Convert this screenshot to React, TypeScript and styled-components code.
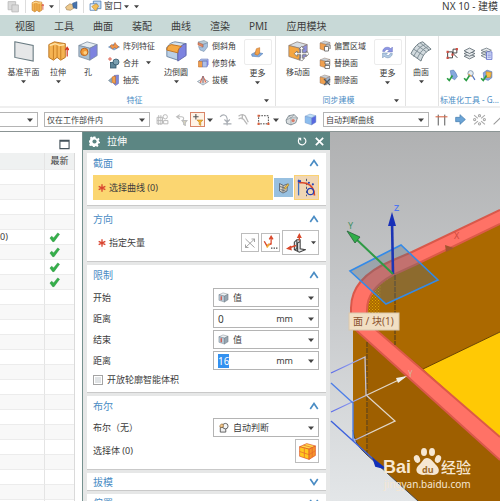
import React, { useEffect, useRef } from "react";
import styled, { createGlobalStyle } from "styled-components";

const GlobalStyle = createGlobalStyle`
  * { box-sizing: border-box; }
  html, body, #root { height: 100%; margin: 0; }
  body {
    overflow: hidden;
    background: #fff;
    color: #3c3c3c;
    font-family: "Noto Sans", "Noto Sans CJK SC", sans-serif;
    font-size: 9px;
  }
  button, input, select { font: inherit; color: inherit; }
  button { background: none; border: 0; padding: 0; margin: 0; }
  svg { display: block; flex: none; }
`;

const Window = styled.div`
  height: 100vh;
  display: flex;
  flex-direction: column;
  overflow: hidden;
`;

/* ---------- title bar and tabs ---------- */

const TitleBar = styled.header`
  flex: none;
  height: 15px;
  padding: 0 2px 3px 7px;
  display: flex;
  align-items: center;
  justify-content: space-between;
`;
const QuickTools = styled.div`
  display: flex;
  align-items: center;
  gap: 5px;
`;
const Split = styled.span`
  width: 1px;
  height: 13px;
  background: #ddd;
`;
const WindowMenu = styled.button`
  display: flex;
  align-items: center;
  gap: 2px;
  line-height: 10px;
`;
const Title = styled.h1`
  margin: 0;
  font-size: 10px;
  line-height: 11px;
  font-weight: 400;
  white-space: nowrap;
`;
const Tabs = styled.nav`
  flex: none;
  height: 21px;
  padding-left: 15px;
  display: flex;
  align-items: center;
  gap: 19px;
  background: #c8d9d7;
`;
const Tab = styled.button`
  font-size: 10px;
  line-height: 20px;
  white-space: nowrap;
`;

/* ---------- ribbon ---------- */

const Ribbon = styled.div`
  flex: none;
  height: 70px;
  display: flex;
  overflow: hidden;
`;
const Group = styled.section<{ $pad?: number; $grow?: boolean }>`
  flex: ${(p) => (p.$grow ? "1 0 62px" : "none")};
  display: flex;
  flex-direction: column;
  justify-content: space-between;
  padding-left: ${(p) => p.$pad ?? 0}px;
  padding-right: 2px;
  border-right: 1px solid #e2e2e2;
`;
const GroupTools = styled.div`
  display: flex;
`;
const GroupFoot = styled.div`
  display: flex;
  align-items: center;
  height: 12px;
  color: #4a8cc4;
  font-size: 8px;
  line-height: 12px;
  white-space: nowrap;
  & > span { flex: 1; text-align: center; }
  & > svg { margin-right: 4px; }
`;
const BigButton = styled.button<{ $w: number }>`
  width: ${(p) => p.$w}px;
  padding-top: 4px;
  display: flex;
  flex-direction: column;
  align-items: center;
  font-size: 8px;
  line-height: 14px;
  white-space: nowrap;
  & > span { margin-top: 3px; }
`;
const MoreButton = styled(BigButton)`
  padding-top: 3px;
  & > span { margin-top: 1px; }
`;
const MoreFrame = styled.i`
  width: 28px;
  height: 26px;
  border: 1px solid #ececec;
  border-radius: 2px;
  display: flex;
  align-items: center;
  justify-content: center;
`;
const SmallColumn = styled.div<{ $w?: number }>`
  width: ${(p) => (p.$w ? p.$w + "px" : "auto")};
  padding: 1px 6px 0;
  display: flex;
  flex-direction: column;
`;
const SmallButton = styled.button`
  display: flex;
  align-items: center;
  gap: 3px;
  height: 17px;
  font-size: 8px;
  line-height: 14px;
  white-space: nowrap;
  & > svg:last-child { margin-left: 4px; }
`;
const IconGrid = styled.div`
  display: grid;
  grid-template-columns: repeat(3, 13px);
  grid-auto-rows: 22px;
  column-gap: 4px;
  padding-top: 5px;
  align-items: center;
`;

/* ---------- selection bar ---------- */

const SelectionBar = styled.div`
  flex: none;
  height: 26px;
  display: flex;
  align-items: center;
  gap: 6px;
  border-top: 2px solid #efefef;
  border-bottom: 1px solid #8b9494;
  overflow: hidden;
`;
const Cluster = styled.div`
  display: flex;
  align-items: center;
  gap: 3px;
`;
const IconButton = styled.button<{ $active?: boolean }>`
  flex: none;
  width: 13px;
  height: 13px;
  display: flex;
  align-items: center;
  justify-content: center;
  ${(p) => p.$active && "outline: 1px solid #d98568; background: #fff3e6;"}
`;
const Combo = styled.span<{ $w?: number; $h: number; $cut?: boolean }>`
  flex: none;
  width: ${(p) => (p.$w ? p.$w + "px" : "100%")};
  height: ${(p) => p.$h}px;
  padding: 0 4px 0 ${(p) => (p.$h > 16 ? 4 : 2)}px;
  display: flex;
  align-items: center;
  gap: 4px;
  background: #fff;
  border: 1px solid #b4b4b4;
  ${(p) => p.$cut && "border-left: 0;"}
`;
const Select = styled.select<{ $small?: boolean }>`
  appearance: none;
  flex: 1;
  min-width: 0;
  border: 0;
  padding: 0;
  background: transparent;
  font-size: ${(p) => (p.$small ? 8 : 9)}px;
  line-height: 12px;
  outline: 0;
`;

/* ---------- lower area ---------- */

const Body = styled.main`
  flex: 1;
  min-height: 0;
  display: flex;
`;
const Navigator = styled.aside`
  flex: none;
  width: 82px;
  overflow: hidden;
  background: #fff;
`;
const NavHead = styled.div`
  height: 21px;
  padding: 3px 12px 0 0;
  display: flex;
  align-items: center;
  justify-content: flex-end;
`;
const NavTable = styled.table`
  width: 75px;
  border-collapse: separate;
  border-spacing: 0;
  table-layout: fixed;
  border-right: 1px solid #dadada;
  th, td {
    padding: 0;
    font-weight: 400;
    border-bottom: 1px solid #ececec;
    border-right: 1px solid #e4e4e4;
  }
  th:last-child, td:last-child { width: 29px; border-right: 0; }
  th { height: 17px; line-height: 14px; background: #eff1f1; text-align: center; }
  td { height: 15px; line-height: 12px; }
  td > svg { margin-left: 4px; }
  tr:nth-child(even) td { background: #f8f8f8; }
`;
const Dialog = styled.form`
  flex: none;
  width: 248px;
  display: flex;
  flex-direction: column;
  overflow: hidden;
  border-left: 1px solid #75918f;
  background: #e6e7e7;
`;
const DialogHead = styled.header`
  flex: none;
  height: 18px;
  padding: 0 5px 0 6px;
  display: flex;
  align-items: center;
  gap: 7px;
  background: #5c8683;
  color: #fff;
`;
const DialogTitle = styled.h2`
  flex: 1;
  margin: 0;
  font-size: 10px;
  line-height: 18px;
  font-weight: 400;
`;
const Sections = styled.div`
  padding: 3px 4px 0;
  display: flex;
  flex-direction: column;
  gap: 3px;
`;
const Section = styled.section<{ $end?: number }>`
  padding: 0 7px ${(p) => p.$end ?? 0}px 6px;
  background: #fff;
  border-bottom: 1px solid #c9c9c9;
`;
const SectionHead = styled.button<{ $open: boolean }>`
  width: 100%;
  height: ${(p) => (p.$open ? 20 : 17)}px;
  display: flex;
  align-items: center;
  justify-content: space-between;
  color: #4a8cc4;
  font-size: 10px;
  line-height: 16px;
`;
const Row = styled.div<{ $h?: number }>`
  height: ${(p) => p.$h ?? 21}px;
  display: flex;
  align-items: center;
  justify-content: space-between;
  line-height: 14px;
`;
const Required = styled.span`
  display: flex;
  align-items: center;
  gap: 3px;
  padding-left: 5px;
  white-space: nowrap;
`;
const PickRow = styled.div`
  display: flex;
  align-items: center;
  gap: 1px;
  height: 25px;
  margin-top: 2px;
`;
const Pick = styled.div`
  flex: 1;
  height: 25px;
  display: flex;
  align-items: center;
  background: #fbd671;
  line-height: 14px;
`;
const Tool = styled.button<{ $w: number; $h: number; $bg?: string; $line?: string }>`
  flex: none;
  width: ${(p) => p.$w}px;
  height: ${(p) => p.$h}px;
  display: flex;
  align-items: center;
  justify-content: center;
  gap: 5px;
  background: ${(p) => p.$bg ?? "#fff"};
  border: 1px solid ${(p) => p.$line ?? "#bdbdbd"};
`;
const ToolSet = styled.div`
  display: flex;
  align-items: center;
  gap: 2px;
`;
const Field = styled.span`
  flex: none;
  width: 106px;
`;
const NumberInput = styled.input`
  flex: 1;
  min-width: 0;
  width: 40px;
  height: 15px;
  padding: 0;
  border: 0;
  outline: 0;
  background: transparent;
  font-size: 10px;
  line-height: 12px;
  caret-color: transparent;
  &::selection { background: #3391f0; color: #fff; }
`;
const Unit = styled.span`
  margin-right: 11px;
`;
const CheckLabel = styled.label`
  display: flex;
  align-items: center;
  gap: 4px;
`;
const CheckBox = styled.input`
  appearance: none;
  width: 10px;
  height: 10px;
  margin: 0;
  border: 1px solid #a4a4a4;
  background: #e0e3e5;
  box-shadow: inset 0 0 0 1px #fff;
`;
const Viewport = styled.section`
  flex: 1;
  min-width: 0;
  overflow: hidden;
  background: #b5b6b7;
  & > svg { width: 100%; height: 100%; }
`;

/* ---------- drawings ---------- */

const Caret = ({ s = 5 }: { s?: number }) => (
  <svg width={s} height={s} viewBox="0 0 6 6" aria-hidden="true">
    <path d="M0 1.5h6L3 5z" fill="#444" />
  </svg>
);

type Kind =
  | "plane" | "extrude" | "hole" | "pattern" | "unite" | "shell" | "blend" | "chamfer" | "trim" | "draft"
  | "more" | "moveface" | "offset" | "replace" | "delete" | "sync" | "surface" | "g1" | "g2" | "g3" | "g4" | "g5" | "g6"
  | "paste" | "hand" | "window" | "ghost" | "undoFilter" | "filter" | "rotate" | "curveGhost" | "marquee" | "gem"
  | "cube" | "ibeam" | "arrow" | "scatter" | "slash" | "sketch" | "curve" | "flip" | "vectorPick" | "vector"
  | "value" | "bool" | "body" | "gear" | "reset" | "close" | "maximize" | "check" | "star" | "up" | "down";

const solid = (top: string, left: string, right: string, line: string) => (
  <g stroke={line} strokeWidth=".8" strokeLinejoin="round">
    <path d="M2 6 11 2l11 3-8 4z" fill={top} />
    <path d="M2 6l12 3v13L2 18z" fill={left} />
    <path d="M14 9l8-4v12l-8 5z" fill={right} />
  </g>
);

const drawings: Record<Kind, React.ReactNode> = {
  plane: <path d="M2 2 22 6v17L2 19z" fill="#e6e7e8" stroke="#697b82" strokeWidth="1.2" />,
  extrude: (
    <>
      <path d="M2 5l6-3 6 1 6 1v15l-5 3-4-3-4 3-5-3z" fill="#f5b352" stroke="#b8711e" />
      <path d="M7 6v15M11 4v15M15 6v15" stroke="#c67c20" />
      <path d="M3 6l6-2 5 2 5-1" stroke="#ffe3a5" strokeWidth="1.6" fill="none" />
      <path d="M22 18V8m-2 3 2-3 2 3" stroke="#d4341f" strokeWidth="1.3" fill="none" />
    </>
  ),
  hole: (
    <>
      {solid("#e4ecf1", "#a9bfd0", "#7d83e0", "#74879b")}
      <circle cx="8" cy="13" r="4" fill="#f29b38" stroke="#b8601a" />
      <circle cx="9" cy="14" r="2" fill="#fbd084" />
    </>
  ),
  pattern: (
    <>
      <path d="M1 14 12 8l11 6-11 6z" fill="#86add9" stroke="#5379a8" />
      <path d="M4 12l4-3 3 3 3-7 3 5 4 3-4 4-4-2-4 3z" fill="#f0964a" stroke="#bc5d25" />
    </>
  ),
  unite: (
    <>
      <rect x="5" y="11" width="11" height="11" fill="#5f8699" stroke="#34586c" strokeWidth="1.6" />
      <circle cx="16" cy="10" r="6" fill="#7ba0b1" stroke="#34586c" strokeWidth="1.6" />
      <path d="M0 4h8M4 0v8" stroke="#d8442f" strokeWidth="1.6" />
    </>
  ),
  shell: (
    <>
      <path d="M12 3l9-1v17l-6 4-4-4z" fill="#8088d8" stroke="#5a62a8" />
      <path d="M8 6l7-2v15l-7-2z" fill="#f0a04f" stroke="#b8601a" />
      <path d="M1 13l6-5v10z" fill="#93a9b9" stroke="#60798b" />
    </>
  ),
  blend: (
    <>
      <path d="M2 10c1-5 4-7 9-8l12 2-8 8z" fill="#d5e3ef" stroke="#6d86a1" />
      <path d="M2 8l12 3v11L2 18z" fill="#b9cfe6" stroke="#6d86a1" />
      <path d="M14 13c1-5 4-8 9-9v13l-9 6z" fill="#7d83e0" stroke="#5a62a8" />
      <path d="M2 11c0-4 2-5 5-6l11 2c-2 1-4 3-4 7z" fill="#f6a944" stroke="#c0701d" />
    </>
  ),
  chamfer: (
    <>
      <path d="M2 4l12-3 8 4-10 4z" fill="#b9cad6" stroke="#71889a" />
      <path d="M12 9l9-3v8l-7 9-8-3-3-7 9 2z" fill="#a7c0dd" stroke="#67809c" />
      <path d="M2 5l10 4v5L2 10z" fill="#e08a64" stroke="#a4533d" />
    </>
  ),
  trim: (
    <>
      <path d="M3 8h8v12H3z" fill="#f0a04f" stroke="#b8601a" />
      <path d="M11 8h9v12h-9zM4 8l4-4h14l-2 4z" fill="#aebfe8" stroke="#5d6fb0" />
      <path d="M20 8l3-4v11l-3 5z" fill="#7d83e0" />
    </>
  ),
  draft: (
    <>
      <path d="M1 15 12 9l11 6-11 7z" fill="#e6edf3" stroke="#6f8394" strokeWidth="1.3" />
      <path d="M6 18l6-14 6 13" stroke="#cf4a33" strokeWidth="1.6" fill="#f7c7b0" />
      <path d="M12 4v15" stroke="#47709a" strokeWidth="1.6" />
    </>
  ),
  more: (
    <>
      <path d="M1 15l8-4 13 3-7 6-13-1z" fill="#7fa9dd" stroke="#4a76b0" />
      <path d="M10 5l6-2v10l-4 4-5-2z" fill="#f2a24a" stroke="#bc6a25" />
    </>
  ),
  moveface: (
    <>
      {solid("#d7dde3", "#f6a640", "#8d90dd", "#8a7a70")}
      <path
        d="M16 7l3 3h-2v4h4v-2l3 3-3 3v-2h-4v4h2l-3 3-3-3h2v-4h-4v2l-3-3 3-3v2h4v-4h-2z"
        fill="#fff" stroke="#666" strokeWidth=".8"
      />
    </>
  ),
  offset: (
    <>
      {solid("#c9d0d6", "#f0a04f", "#c9d0d6", "#8b6a55")}
      <path d="M11 13h8v9h-8zM14 10h8v8" fill="#fff" stroke="#555" strokeWidth="1.5" />
    </>
  ),
  replace: (
    <>
      {solid("#c9d0d6", "#f0a04f", "#d9dde0", "#8b6a55")}
      <path d="M12 9h9v5h-9zM12 17h9v6h-9z" fill="#fff" stroke="#555" strokeWidth="1.5" />
    </>
  ),
  delete: (
    <>
      {solid("#c9d0d6", "#f0a04f", "#9fb4cf", "#8b6a55")}
      <path d="M10 10l12 12M22 10 10 22" stroke="#4f5b66" strokeWidth="2.4" />
    </>
  ),
  sync: (
    <>
      <path d="M3 10C4 2 13 0 18 5l3-3v9h-9l3-3c-3-3-7-2-8 2z" fill="#8d97e6" stroke="#6a73bd" />
      <path d="M21 14c-1 8-10 10-15 5l-3 3v-9h9l-3 3c3 3 7 2 8-2z" fill="#b4cce6" stroke="#6b8eb0" />
    </>
  ),
  surface: (
    <>
      <path d="M1 15C5 7 9 3 14 2l9 8c-5 2-9 6-11 13z" fill="#d2dade" stroke="#66757d" />
      <path d="M4 18C8 10 12 6 17 5M8 20C11 13 15 9 20 7M4 10l11 7M8 6l10 7M11 3l10 8" stroke="#7b8a92" fill="none" />
    </>
  ),
  g1: (
    <>
      <path d="M3 9h9v11H3zM13 4h7v7h-7zM12 11l9 9" fill="none" stroke="#444" strokeWidth="1.8" />
      <path d="M1 7h4v4H1zM10 12h4v4h-4zM1 18h4v4H1zM18 2h4v4h-4z" fill="#ce4d42" />
    </>
  ),
  g2: (
    <g fill="#e7eaec" stroke="#56636b" strokeWidth="1.5">
      <path d="M2 17l10-4 10 4-10 5z" /><path d="M2 12l10-4 10 4-10 5z" /><path d="M2 7l10-5 10 5-10 5z" />
    </g>
  ),
  g3: (
    <>
      <path d="M2 16l10-4 8 4-8 5zM2 11l10-4 8 4-8 5zM2 6l10-4 9 4-9 5z" fill="#e7eaec" stroke="#66737b" strokeWidth="1.4" />
      <path d="M12 9h10v14H12z" fill="#dbe3fa" stroke="#5663c7" strokeWidth="1.4" />
      <path d="M14 13h6M14 16h6M14 19h6" stroke="#5663c7" />
    </>
  ),
  g4: (
    <>
      <path d="M8 3l6-1 4 5 3 7-5 6-6-4z" fill="#84a8de" stroke="#496fae" />
      <path d="M2 17l4 4 6-9" stroke="#2c9d45" strokeWidth="3" fill="none" />
    </>
  ),
  g5: (
    <>
      <circle cx="14" cy="8" r="5" fill="#e2ebf3" stroke="#7890a8" strokeWidth="1.6" />
      <path d="M17 12l5 8" stroke="#5878c0" strokeWidth="2.4" />
      <path d="M10 9l6 5" stroke="#e29a3e" strokeWidth="2" />
      <path d="M2 17l4 4 6-9" stroke="#2c9d45" strokeWidth="3" fill="none" />
    </>
  ),
  g6: (
    <>
      <path d="M6 7l7-5 9 3v11l-7 5-8-3z" fill="#87a9e6" stroke="#4e70ad" />
      <path d="M11 5l10 1-1 9-8 1z" fill="#f5bd45" stroke="#bd7d20" />
      <path d="M2 17l4 4 6-9" stroke="#2c9d45" strokeWidth="3" fill="none" />
    </>
  ),
  paste: (
    <g fill="#dadada" stroke="#b5b5b5" strokeWidth="1.4">
      <path d="M2 3h14v15H2z" /><path d="M9 9h12v13H9z" />
    </g>
  ),
  hand: (
    <>
      <path d="M1 13l8-6 6 2 3 5-8 5-7-1z" fill="#edc98d" stroke="#927043" />
      <path d="M14 6l8-3v13l-7-2z" fill="#4773ad" stroke="#2f5484" />
    </>
  ),
  window: (
    <>
      <path d="M8 2h14v14H8z" fill="#c1d9f2" stroke="#5784b8" strokeWidth="1.6" />
      <path d="M2 7h13v12H2z" fill="#ebf3fc" stroke="#5784b8" strokeWidth="1.6" />
      <path d="M5 12l8-5 5 4-6 9z" fill="#f4bd55" stroke="#b98425" />
    </>
  ),
  ghost: (
    <g fill="none" stroke="#b9b9b9" strokeWidth="1.8">
      <path d="M2 8h10v12H2zM5 4v18M9 4v18M2 14h10" /><circle cx="17" cy="7" r="4" /><path d="M14 14h8v6h-8z" />
    </g>
  ),
  undoFilter: (
    <g fill="none" stroke="#bdbdbd" strokeWidth="2">
      <path d="M9 3 3 7l6 4M3 7h9c5 0 5 5 2 6" /><path d="M13 14h9l-3 4v5l-3-2v-3z" fill="#e2ddbf" />
    </g>
  ),
  filter: (
    <>
      <path d="M4 7h10M9 2v10" stroke="#555" strokeWidth="2" />
      <path d="M11 13h11l-4 4v6l-3-2v-4z" fill="#f4b536" stroke="#b97a17" />
    </>
  ),
  rotate: (
    <g fill="none" stroke="#a8adb3" strokeWidth="2">
      <path d="M2 7c5-6 12-4 13 3v6M10 12l5 5 5-5" /><path d="M8 20h15M15 13v10" />
    </g>
  ),
  curveGhost: (
    <path d="M1 6c6-5 13-3 14 3l4 8M1 11c5-3 9-1 11 3l5 7M8 4v8" fill="none" stroke="#b8b8b8" strokeWidth="2.4" />
  ),
  marquee: (
    <>
      <path d="M3 5h18v15H3z" fill="none" stroke="#444" strokeWidth="1.8" strokeDasharray="3 2" />
      <path d="M1 3h4v4H1zM19 18h4v4h-4zM1 18h4v4H1z" fill="#d9603d" />
    </>
  ),
  gem: (
    <>
      <path d="M2 13l5-8 10-2 6 6-3 9-9 4-8-3z" fill="#d9dddf" stroke="#6b7880" strokeWidth="1.4" />
      <path d="M2 13l9-4 12 0M11 9v13M7 5l4 4 6-6" fill="none" stroke="#7e8b93" />
      <circle cx="15" cy="14" r="3" fill="#d97b68" />
    </>
  ),
  cube: solid("#bfe0f7", "#8cbdee", "#5868e0", "#6f8fc4"),
  ibeam: (
    <>
      <path d="M6 3v20M18 3v20" stroke="#555" strokeWidth="1.8" />
      <path d="M1 7h22" stroke="#d96a4a" strokeWidth="2" />
    </>
  ),
  arrow: <path d="M3 8h8V3l10 9-10 9v-5H3z" fill="#6ba4d6" stroke="#3f77a8" strokeWidth="1.2" />,
  scatter: (
    <g fill="none" stroke="#a9a9a9" strokeWidth="2">
      <path d="M2 4l7 6M22 4l-7 6M2 21l7-6M22 21l-7-6" /><circle cx="12" cy="5" r="2" /><circle cx="12" cy="20" r="2" />
      <circle cx="3" cy="12" r="2" /><circle cx="21" cy="12" r="2" />
    </g>
  ),
  slash: <path d="M3 21 21 4" stroke="#999" strokeWidth="2" />,
  sketch: (
    <>
      <path d="M3 3l8 4 8-3-1 14-8 4-7-4z" fill="#d7d2c4" stroke="#4b5563" strokeWidth="1.6" />
      <path d="M10 7v13M4 9l12 4M5 15l10 3" stroke="#4b5563" strokeWidth="1.4" />
      <path d="M12 12l8-9 2 3-8 9z" fill="#f2c14a" stroke="#77622c" />
    </>
  ),
  curve: (
    <>
      <path d="M2 2v20" stroke="#3f6fc0" strokeWidth="1.6" />
      <path d="M12 1v22" stroke="#3e4f74" strokeWidth="1.2" strokeDasharray="3 2" />
      <path d="M2 5c3 2 6 0 10 2 6 2 10 6 10 15" fill="none" stroke="#d9482b" strokeWidth="2.2" />
      <path d="M1 4h4" stroke="#2742b5" strokeWidth="2.6" />
      <circle cx="17" cy="17" r="4" stroke="#2742b5" strokeWidth="1.5" />
      <circle cx="15" cy="6" r="1.4" fill="#2742b5" /><circle cx="20" cy="8" r="1.4" fill="#2742b5" />
    </>
  ),
  flip: (
    <g stroke="#9a9a9a" strokeWidth="1.8" fill="none">
      <path d="M3 4l18 17M21 4 3 21M15 4h6v6M9 21H3v-6" />
    </g>
  ),
  vectorPick: (
    <>
      <path d="M13 15V2m-3 5 3-5 3 5" fill="none" stroke="#d9482b" strokeWidth="2" />
      <path d="M2 10l4 7 7-3" fill="none" stroke="#d9482b" strokeWidth="2.2" />
      <path d="M6 20l4-6" stroke="#efab35" strokeWidth="3" />
      <path d="M13 20h2v2h-2zM17 20h2v2h-2zM21 20h2v2h-2z" fill="#333" />
    </>
  ),
  vector: (
    <>
      <path d="M10 20V11l3-3h4v11l6 1-7 3zM13 9v10l-3 1M17 10l-3 2v10" fill="#e6e8ea" stroke="#444" strokeWidth="1.3" />
      <path d="M16 9V3M12 15l-9 3" stroke="#d9482b" strokeWidth="1.6" />
      <path d="M16 0l3 6h-6zM0 19l6-4 1 6z" fill="#d9482b" />
    </>
  ),
  value: (
    <>
      {solid("#edf1f3", "#b9cbd9", "#97a6b1", "#53616b")}
      <path d="M7 9v9" stroke="#d6402b" strokeWidth="2.4" />
    </>
  ),
  bool: (
    <>
      <path d="M5 12h12v10H5z" fill="#eee" stroke="#4a4a4a" strokeWidth="1.8" />
      <circle cx="16" cy="9" r="6" fill="#f5f5f5" stroke="#4a4a4a" strokeWidth="1.8" />
      <path d="M4 11c0-5 3-8 7-6l1 5-5 2z" fill="#f3c98f" stroke="#8f6631" strokeWidth="1.4" />
    </>
  ),
  body: (
    <>
      {solid("#ffdc4a", "#ffc81f", "#f5942a", "#dc4a24")}
      <path d="M8 8v12M2 12l12 4 8-5M18 7v12M7 4l11 3" stroke="#e5672b" strokeWidth=".9" fill="none" />
    </>
  ),
  gear: (
    <>
      <path
        d="M10 1h4l1 4 3 1 3-2 2 3-2 3 1 2 2 1v3h-3l-2 3 2 2-3 3-3-2-2 1-1 2h-3l-1-3-3-1-3 1-2-3 2-2-1-3-2-1v-3l3-1 1-3-1-2 3-3 3 2z"
        fill="#fff"
      />
      <circle cx="12" cy="12" r="4.5" fill="#5c8683" />
    </>
  ),
  reset: (
    <>
      <path d="M16 4a9 9 0 1 1-11 3" fill="none" stroke="#fff" strokeWidth="2.8" />
      <path d="M2 4h8v8z" fill="#fff" />
    </>
  ),
  close: <path d="M4 4l16 16M20 4 4 20" stroke="#fff" strokeWidth="3.8" />,
  maximize: <path d="M2 3h20v18H2zM2 5h20" fill="none" stroke="#44525a" strokeWidth="2.4" />,
  check: <path d="M2 13l4-4 4 4L19 2l4 3L11 21H8z" fill="#35b04a" stroke="#288c3b" />,
  star: <path d="M12 1v22M2 7l20 10M22 7 2 17" stroke="#d9442f" strokeWidth="4" />,
  up: <path d="M3 19 12 6l9 13" fill="none" stroke="#4a8cc4" strokeWidth="4" />,
  down: <path d="M3 5l9 13 9-13" fill="none" stroke="#4a8cc4" strokeWidth="4" />,
};

const Icon = ({ kind, size = 12 }: { kind: Kind; size?: number }) => (
  <svg width={size} height={size} viewBox="0 0 24 24" fill="none" aria-hidden="true">
    {drawings[kind]}
  </svg>
);

const Scene = () => (
  <svg viewBox="330 132 170 369" preserveAspectRatio="xMinYMin slice" role="img" aria-label="模型视图">
    <defs>
      <linearGradient id="sky" x1="0" y1="0" x2="0" y2="1">
        <stop offset="0" stopColor="#b0b1b2" />
        <stop offset=".45" stopColor="#c6c8ca" />
        <stop offset="1" stopColor="#e3e6e8" />
      </linearGradient>
      <pattern id="dots" width="3" height="3" patternUnits="userSpaceOnUse">
        <path d="M0 0h1v1H0zM1.5 1.5h1v1h-1z" fill="#e2a900" />
      </pattern>
      <linearGradient id="wire" gradientUnits="userSpaceOnUse" x1="331" y1="0" x2="372" y2="0">
        <stop offset="0" stopColor="#5b6be8" />
        <stop offset=".5" stopColor="#8d9aee" />
        <stop offset="1" stopColor="#e0d6c8" />
      </linearGradient>
    </defs>
    <rect x="330" y="132" width="170" height="369" fill="url(#sky)" />

    <path d="M353 320V430Q354 444 366 454L418 501H500V440L375 320z" fill="#9e5f00" />
    <path d="M353 322V430Q354 444 368 456V336z" fill="#aa6800" />
    <path d="M500 224 417 264 393 275Q366 289 367 310L378 332 424 369 500 332z" fill="#ab6900" />
    <path d="M393 275Q366 289 367 313L379 322 381 285z" fill="url(#dots)" />
    <path d="M500 332 423 369 500 438z" fill="#ffc905" />
    <path d="M500 332 423 369" stroke="#6b4400" />
    <path
      d="M500 210 412 252 391 261Q351 278 351 308V324L358 332 500 460V437L375 329Q366 320 367 310 367 289 393 275L417 264 500 224z"
      fill="#ff7266"
    />
    <path d="M500 210 412 252 391 261Q351 278 351 308V324L358 332 500 460" fill="none" stroke="#d9584a" strokeWidth="2" />
    <path d="M500 437 375 329Q366 320 367 310 367 289 393 275L417 264 500 224" fill="none" stroke="#dc5a48" strokeWidth="2" />
    <path d="M367 342V455M395 275V345" stroke="#4b3920" strokeWidth="1" strokeDasharray="5 1" />
    <path d="M353 430Q354 444 366 454L418 501" fill="none" stroke="#4b4a48" />

    <g fill="none" stroke="url(#wire)" strokeWidth="1.3">
      <path d="M331 373 365 357 366 395 395 421 353 441M331 412 405 377" />
    </g>
    <g fill="none" strokeWidth="1.4">
      <path d="M331 383 353 403 353 441" stroke="#4d7fe8" />
      <path d="M331 421 382 467" stroke="#3d62dd" />
    </g>
    <path d="M396 378 407 376 398 383z" fill="#f0eee8" />
    <path d="M374 460 384 468 376 466z" fill="#1230b8" stroke="#1230b8" strokeWidth="2" />
    <text x="408" y="377" fontSize="8" fill="#d8b4a0">Y</text>

    <path d="M350 271 401 245 438 280 386 304z" fill="#5a6f80" fillOpacity=".36" stroke="#338ae8" strokeWidth="1.6" />
    <path d="M393 274 392 220" stroke="#1c34b4" strokeWidth="2.6" />
    <path d="M392 212 396 226H388z" fill="#1830b8" />
    <path d="M393 274 355 238" stroke="#2f9a45" strokeWidth="2" />
    <path d="M347 231 360 237 355 243z" fill="#2fae48" stroke="#27613a" strokeWidth=".8" />
    <path d="M445 245 454 248 446 252z" fill="#a3542d" />
    <text x="394" y="211" fontSize="9" fontWeight="600" fill="#5078f0">Z</text>
    <text x="348" y="229" fontSize="9" fill="#3f8f62">Y</text>
    <text x="454" y="239" fontSize="9" fill="#cd4a3e">X</text>

    <rect x="349" y="313" width="50" height="17" fill="#f2dfc3" stroke="#d9c7ad" />
    <text x="353" y="325" fontSize="10" fill="#8a5330">面 / 块(1)</text>

    <g fill="#f6e7d2">
      <text x="383" y="473" fontSize="18" fontWeight="700" fontFamily="Liberation Sans, sans-serif">Bai</text>
      <ellipse cx="417" cy="459" rx="3" ry="4" transform="rotate(-20 417 459)" />
      <ellipse cx="424" cy="452" rx="3" ry="4" />
      <ellipse cx="432" cy="452" rx="3" ry="4" />
      <ellipse cx="438" cy="459" rx="3" ry="4" transform="rotate(20 438 459)" />
      <path d="M427 458c4 0 6 4 10 8 4 5 1 9-4 9-3 0-6-1-9 0-6 0-10-4-6-9 4-3 5-8 9-8z" />
      <text x="441" y="473" fontSize="15" fontWeight="500">经验</text>
      <text x="384" y="488" fontSize="10">jingyan.baidu.com</text>
    </g>
    <text x="422" y="473" fontSize="9" fontWeight="700" fill="#9e6a2c">du</text>
  </svg>
);

/* ---------- composed parts ---------- */

const Big = ({ kind, label, w, menu = true }: { kind: Kind; label: string; w: number; menu?: boolean }) => (
  <BigButton $w={w}>
    <Icon kind={kind} size={22} />
    <span>{label}</span>
    {menu && <Caret />}
  </BigButton>
);

const More = ({ kind }: { kind: Kind }) => (
  <MoreButton $w={31}>
    <MoreFrame><Icon kind={kind} size={13} /></MoreFrame>
    <span>更多</span>
    <Caret />
  </MoreButton>
);

const Small = ({ kind, label, menu }: { kind: Kind; label: string; menu?: boolean }) => (
  <SmallButton>
    <Icon kind={kind} />
    <span>{label}</span>
    {menu && <Caret />}
  </SmallButton>
);

const BarIcon = ({ kind, name, active }: { kind: Kind; name: string; active?: boolean }) => (
  <IconButton type="button" aria-label={name} $active={active}>
    <Icon kind={kind} size={13} />
  </IconButton>
);

const Choice = ({ id, label, value, icon }: { id: string; label: string; value: string; icon: Kind }) => (
  <Row>
    <label htmlFor={id}>{label}</label>
    <Field>
      <Combo $h={19}>
        <Icon kind={icon} size={11} />
        <Select id={id} defaultValue={value}><option>{value}</option></Select>
        <Caret s={6} />
      </Combo>
    </Field>
  </Row>
);

const Distance = ({ id, value, active }: { id: string; value: string; active?: boolean }) => {
  const ref = useRef<HTMLInputElement>(null);
  useEffect(() => {
    if (active) {
      ref.current?.focus();
      ref.current?.select();
    }
  }, [active]);
  return (
    <Row>
      <label htmlFor={id}>距离</label>
      <Field>
        <Combo $h={19}>
          <NumberInput id={id} ref={ref} defaultValue={value} />
          <Unit>mm</Unit>
          <button type="button" aria-label="选项"><Caret s={6} /></button>
        </Combo>
      </Field>
    </Row>
  );
};

const Head = ({ title, open = true }: { title: string; open?: boolean }) => (
  <SectionHead type="button" aria-expanded={open} $open={open}>
    {title}
    <Icon kind={open ? "up" : "down"} size={10} />
  </SectionHead>
);

const tabs = ["视图", "工具", "曲面", "装配", "曲线", "渲染", "PMI", "应用模块"];
const rows = Array.from({ length: 24 }, (_, i) => ({ name: i === 4 ? "0)" : "", fresh: i >= 4 && i <= 7 }));

export default function App() {
  return (
    <Window>
      <GlobalStyle />
      <TitleBar>
        <QuickTools>
          <BarIcon kind="paste" name="粘贴" />
          <Split />
          <BarIcon kind="extrude" name="拉伸" />
          <Caret />
          <Split />
          <BarIcon kind="hand" name="触控" />
          <Split />
          <WindowMenu>
            <Icon kind="window" size={13} />窗口<Caret />
          </WindowMenu>
          <Caret />
        </QuickTools>
        <Title>NX 10 - 建模</Title>
      </TitleBar>
      <Tabs>{tabs.map((t) => <Tab key={t}>{t}</Tab>)}</Tabs>

      <Ribbon>
        <Group $pad={5}>
          <GroupTools>
            <Big kind="plane" label="基准平面" w={37} />
            <Big kind="extrude" label="拉伸" w={32} />
            <Big kind="hole" label="孔" w={28} menu={false} />
            <SmallColumn $w={59}>
              <Small kind="pattern" label="阵列特征" />
              <Small kind="unite" label="合并" menu />
              <Small kind="shell" label="抽壳" />
            </SmallColumn>
            <Big kind="blend" label="边倒圆" w={30} />
            <SmallColumn>
              <Small kind="chamfer" label="倒斜角" />
              <Small kind="trim" label="修剪体" />
              <Small kind="draft" label="拔模" />
            </SmallColumn>
            <More kind="more" />
          </GroupTools>
          <GroupFoot><span>特征</span><Caret /></GroupFoot>
        </Group>
        <Group $pad={7}>
          <GroupTools>
            <Big kind="moveface" label="移动面" w={30} menu={false} />
            <SmallColumn>
              <Small kind="offset" label="偏置区域" />
              <Small kind="replace" label="替换面" />
              <Small kind="delete" label="删除面" />
            </SmallColumn>
            <More kind="sync" />
          </GroupTools>
          <GroupFoot><span>同步建模</span><Caret /></GroupFoot>
        </Group>
        <Group>
          <Big kind="surface" label="曲面" w={30} />
        </Group>
        <Group $pad={1} $grow>
          <GroupTools>
            <SmallColumn>
              <IconGrid>
                <BarIcon kind="g1" name="属性" />
                <BarIcon kind="g2" name="图层" />
                <BarIcon kind="g3" name="图层列表" />
                <BarIcon kind="g4" name="检查部件" />
                <BarIcon kind="g5" name="检查查找" />
                <BarIcon kind="g6" name="检查装配" />
              </IconGrid>
            </SmallColumn>
          </GroupTools>
          <GroupFoot>标准化工具 - G...</GroupFoot>
        </Group>
      </Ribbon>

      <SelectionBar>
        <Combo $w={38} $h={15} $cut>
          <Select $small aria-label="类型过滤器" />
          <Caret s={6} />
        </Combo>
        <Combo $w={106} $h={15}>
          <Select $small aria-label="选择范围"><option>仅在工作部件内</option></Select>
          <Caret s={6} />
        </Combo>
        <BarIcon kind="ghost" name="装配选择" />
        <Cluster>
          <BarIcon kind="undoFilter" name="重置过滤器" />
          <BarIcon kind="filter" name="过滤器" active />
          <Caret s={6} />
        </Cluster>
        <BarIcon kind="rotate" name="旋转点" />
        <BarIcon kind="curveGhost" name="曲线" />
        <Cluster>
          <BarIcon kind="marquee" name="矩形选择" />
          <Caret s={6} />
        </Cluster>
        <BarIcon kind="gem" name="隐藏线" />
        <BarIcon kind="cube" name="着色" />
        <Combo $w={106} $h={15}>
          <Select $small aria-label="曲线规则"><option>自动判断曲线</option></Select>
          <Caret s={6} />
        </Combo>
        <BarIcon kind="ibeam" name="在相交处停止" />
        <BarIcon kind="arrow" name="跟随圆角" />
        <BarIcon kind="scatter" name="捕捉点" />
        <BarIcon kind="slash" name="端点" />
      </SelectionBar>

      <Body>
        <Navigator>
          <NavHead>
            <button aria-label="最大化"><Icon kind="maximize" size={11} /></button>
          </NavHead>
          <NavTable>
            <thead><tr><th /><th>最新</th></tr></thead>
            <tbody>
              {rows.map((r, i) => (
                <tr key={i}>
                  <td>{r.name}</td>
                  <td>{r.fresh && <Icon kind="check" size={11} />}</td>
                </tr>
              ))}
            </tbody>
          </NavTable>
        </Navigator>

        <Dialog onSubmit={(e) => e.preventDefault()}>
          <DialogHead>
            <Icon kind="gear" size={11} />
            <DialogTitle>拉伸</DialogTitle>
            <button type="button" aria-label="重置"><Icon kind="reset" size={10} /></button>
            <button type="button" aria-label="关闭"><Icon kind="close" size={11} /></button>
          </DialogHead>
          <Sections>
            <Section $end={5}>
              <Head title="截面" />
              <PickRow>
                <Pick><Required><Icon kind="star" size={8} />选择曲线 (0)</Required></Pick>
                <Tool type="button" aria-label="绘制截面" $w={19} $h={19} $bg="#98c0e0" $line="#98c0e0">
                  <Icon kind="sketch" size={12} />
                </Tool>
                <Tool type="button" aria-label="曲线" $w={25} $h={25} $bg="#f0d6b4" $line="#fbd272">
                  <Icon kind="curve" size={19} />
                </Tool>
              </PickRow>
            </Section>
            <Section $end={5}>
              <Head title="方向" />
              <Row $h={27}>
                <Required><Icon kind="star" size={8} />指定矢量</Required>
                <ToolSet>
                  <Tool type="button" aria-label="反向" $w={18} $h={19}><Icon kind="flip" size={12} /></Tool>
                  <Tool type="button" aria-label="矢量对话框" $w={19} $h={19}><Icon kind="vectorPick" size={15} /></Tool>
                  <Tool type="button" aria-label="矢量类型" $w={37} $h={25}>
                    <Icon kind="vector" size={20} /><Caret />
                  </Tool>
                </ToolSet>
              </Row>
            </Section>
            <Section $end={3}>
              <Head title="限制" />
              <Row $h={2} />
              <Choice id="start" label="开始" value="值" icon="value" />
              <Distance id="startDistance" value="0" />
              <Choice id="end" label="结束" value="值" icon="value" />
              <Distance id="endDistance" value="16" active />
              <Row $h={18}>
                <CheckLabel><CheckBox type="checkbox" />开放轮廓智能体积</CheckLabel>
              </Row>
            </Section>
            <Section $end={5}>
              <Head title="布尔" />
              <Row $h={1} />
              <Choice id="boolean" label="布尔（无）" value="自动判断" icon="bool" />
              <Row $h={26}>
                <span>选择体 (0)</span>
                <Tool type="button" aria-label="选择体" $w={24} $h={24}><Icon kind="body" size={19} /></Tool>
              </Row>
            </Section>
            <Section><Head title="拔模" open={false} /></Section>
            <Section><Head title="偏置" open={false} /></Section>
          </Sections>
        </Dialog>

        <Viewport><Scene /></Viewport>
      </Body>
    </Window>
  );
}
